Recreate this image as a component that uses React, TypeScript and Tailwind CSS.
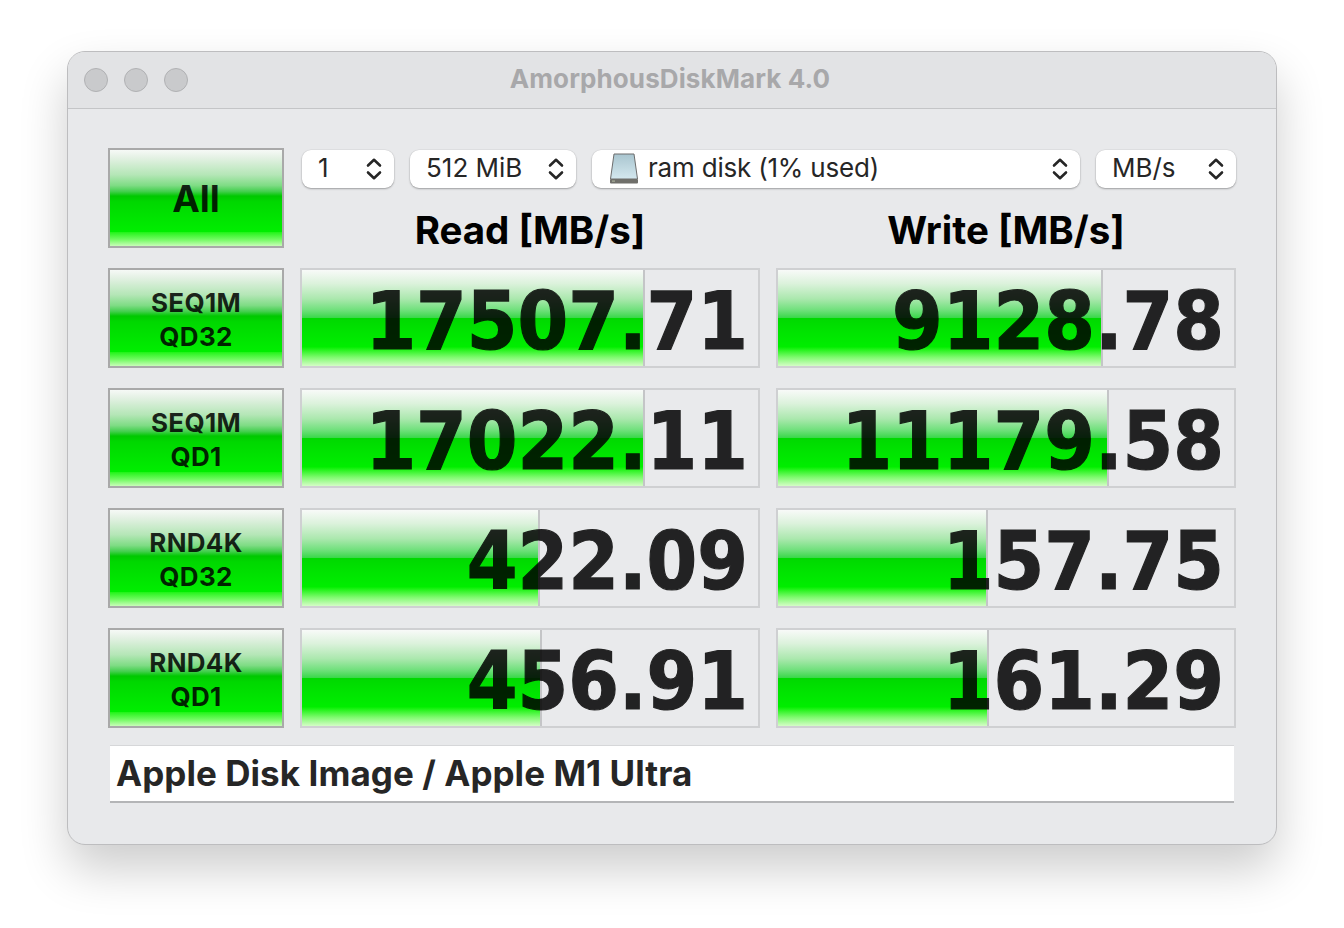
const btnGreen = "bg-[linear-gradient(to_bottom,#f6f9f6_0%,#e4f1e4_8%,#b4e6b6_26%,#7edc84_37%,#45cf50_43%,#00c800_48%,#00d800_54%,#00ee00_85%,#28f41e_86%,#70fa60_93%,#c8fdb8_100%)]";
const barGreen = "bg-[linear-gradient(to_bottom,#f8faf8_0%,#dcf2dc_14%,#abe8ae_30%,#6ee07a_42%,#3cd84c_49.500%,#00d800_50%,#00e200_62%,#00ee00_80%,#18f210_82%,#80fa70_91%,#d4fdc6_100%)]";

function Chevrons() {
  return (
    <svg width="16" height="22" viewBox="0 0 16 22" fill="none" stroke="#262626" strokeWidth="2.6" strokeLinecap="round" strokeLinejoin="round">
      <path d="M2 7.500 L8 1.800 L14 7.500" />
      <path d="M2 14.500 L8 20.200 L14 14.500" />
    </svg>
  );
}

function Disk() {
  return (
    <svg width="30" height="32" viewBox="0 0 30 32">
      <defs>
        <linearGradient id="d" x1="0" y1="0" x2="0" y2="1">
          <stop offset="0" stopColor="#a9c5cf" />
          <stop offset="1" stopColor="#d4e8ef" />
        </linearGradient>
      </defs>
      <path d="M5 1 H25 L28.500 26 H1.500 Z" fill="url(#d)" stroke="#6d6d6d" strokeWidth="1" />
      <rect x="1" y="26" width="28" height="4.500" rx="1" fill="#6f6f6a" />
      <rect x="3" y="27.500" width="3" height="1.200" fill="#a9b09a" />
    </svg>
  );
}

function Select({ label, className, icon }: { label: string; className: string; icon?: boolean }) {
  return (
    <div className={`h-[38px] rounded-[9px] bg-white shadow-[0_1px_2px_rgba(0,0,0,0.3),0_0_0_0.5px_rgba(0,0,0,0.06)] flex items-center pr-[12px] text-[#262626] text-[26px] ${className}`}>
      {icon && <span className="mr-[9px] flex"><Disk /></span>}
      <span className={`flex-1 whitespace-nowrap pb-[3px] ${icon ? "tracking-[-0.2px]" : ""}`}>{label}</span>
      <Chevrons />
    </div>
  );
}

function GreenButton({ children, big }: { children: React.ReactNode; big?: boolean }) {
  return (
    <div className={`w-[176px] h-[100px] shrink-0 border-[2px] border-[#a9a9a9] flex flex-col items-center justify-center font-bold text-black/85 ${btnGreen} ${big ? "text-[37px] pt-[2px]" : "text-[26px] leading-[34px] pt-[3px] tracking-[0.3px]"}`}>
      {children}
    </div>
  );
}

function Result({ value, width }: { value: string; width: number }) {
  return (
    <div className="relative w-[460px] h-[100px] border-[2px] border-[#cfd0d2] bg-[#e9eaec] overflow-hidden">
      <div className={`absolute left-0 top-0 bottom-0 border-r-[2px] border-[#c4c5c7] ${barGreen}`} style={{ width }} />
      <div
        className="relative h-full flex items-center justify-end pr-[10px] pt-[6px] text-black opacity-85 font-bold text-[81px] leading-none [-webkit-text-stroke:1.2px_#000]"
        style={{ fontFamily: '"DejaVu Sans Condensed", "DejaVu Sans", sans-serif', fontStretch: "condensed" }}
      >
        {value}
      </div>
    </div>
  );
}

const rows = [
  { a: "SEQ1M", b: "QD32", r: "17507.71", rw: 343, w: "9128.78", ww: 325 },
  { a: "SEQ1M", b: "QD1", r: "17022.11", rw: 343, w: "11179.58", ww: 331 },
  { a: "RND4K", b: "QD32", r: "422.09", rw: 238, w: "157.75", ww: 210 },
  { a: "RND4K", b: "QD1", r: "456.91", rw: 240, w: "161.29", ww: 211 },
];

export default function App() {
  return (
    <div className="w-[1344px] h-[928px] bg-white pt-[51px] pl-[67px] font-['Inter','Liberation_Sans',sans-serif]">
      <div className="w-[1210px] h-[794px] rounded-[18px] bg-[#e8e9eb] border border-[#bdbdbf] shadow-[0_24px_48px_rgba(0,0,0,0.2)] overflow-hidden">
        <div className="h-[57px] bg-[#e2e3e5] border-b border-[#c4c5c7] flex items-center pl-[16px] relative">
          <div className="flex gap-[16px]">
            <span className="w-[24px] h-[24px] rounded-full bg-[#c9cacc] border border-[#b0b1b3]" />
            <span className="w-[24px] h-[24px] rounded-full bg-[#c9cacc] border border-[#b0b1b3]" />
            <span className="w-[24px] h-[24px] rounded-full bg-[#c9cacc] border border-[#b0b1b3]" />
          </div>
          <div className="absolute inset-0 flex items-center justify-center text-[26px] font-bold text-[#a8a8aa] tracking-[0.1px] pr-[4px] pb-[4px]">AmorphousDiskMark 4.0</div>
        </div>
        <div className="pl-[40px] pt-[39px] flex flex-col gap-[20px]">
          <div className="flex gap-[16px] h-[100px]">
            <GreenButton big>All</GreenButton>
            <div className="w-[936px] flex flex-col pt-[2px]">
              <div className="flex pl-[2px] gap-[16px]">
                <Select label="1" className="w-[92px] pl-[16px]" />
                <Select label="512 MiB" className="w-[166px] pl-[16px]" />
                <Select label="ram disk (1% used)" className="w-[488px] pl-[17px]" icon />
                <Select label="MB/s" className="w-[140px] pl-[16px]" />
              </div>
              <div className="flex gap-[16px] mt-[19px]">
                <div className="w-[460px] text-center text-[38.500px] leading-[46px] font-bold text-black">Read [MB/s]</div>
                <div className="w-[460px] text-center text-[38.500px] leading-[46px] font-bold text-black">Write [MB/s]</div>
              </div>
            </div>
          </div>
          {rows.map((row, i) => (
            <div key={i} className="flex gap-[16px]">
              <GreenButton>
                <span>{row.a}</span>
                <span>{row.b}</span>
              </GreenButton>
              <Result value={row.r} width={row.rw} />
              <Result value={row.w} width={row.ww} />
            </div>
          ))}
          <div className="ml-[2px] -mt-[3px] w-[1124px] h-[58px] bg-white border-t border-t-[#d6d7d9] border-b-2 border-b-[#b4b5b7] flex items-center pl-[6px] text-[35px] font-bold text-[#262626] tracking-[0.06px]">
            Apple Disk Image / Apple M1 Ultra
          </div>
        </div>
      </div>
    </div>
  );
}
